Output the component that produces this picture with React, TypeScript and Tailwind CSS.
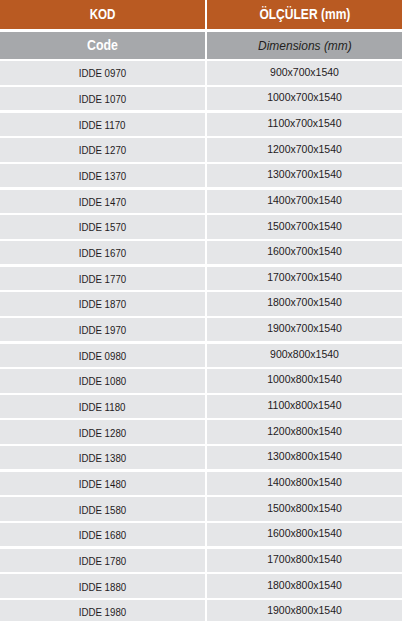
import React from "react";

const rows: [string, string][] = [
  ["IDDE 0970", "900x700x1540"],
  ["IDDE 1070", "1000x700x1540"],
  ["IDDE 1170", "1100x700x1540"],
  ["IDDE 1270", "1200x700x1540"],
  ["IDDE 1370", "1300x700x1540"],
  ["IDDE 1470", "1400x700x1540"],
  ["IDDE 1570", "1500x700x1540"],
  ["IDDE 1670", "1600x700x1540"],
  ["IDDE 1770", "1700x700x1540"],
  ["IDDE 1870", "1800x700x1540"],
  ["IDDE 1970", "1900x700x1540"],
  ["IDDE 0980", "900x800x1540"],
  ["IDDE 1080", "1000x800x1540"],
  ["IDDE 1180", "1100x800x1540"],
  ["IDDE 1280", "1200x800x1540"],
  ["IDDE 1380", "1300x800x1540"],
  ["IDDE 1480", "1400x800x1540"],
  ["IDDE 1580", "1500x800x1540"],
  ["IDDE 1680", "1600x800x1540"],
  ["IDDE 1780", "1700x800x1540"],
  ["IDDE 1880", "1800x800x1540"],
  ["IDDE 1980", "1900x800x1540"],
];

export default function App() {
  return (
    <div
      className="w-[402px] h-[621px] overflow-hidden bg-white"
      style={{ fontFamily: '"Liberation Sans", Arial, sans-serif' }}
    >
      <div className="grid grid-cols-[205px_195px] gap-x-[2px] gap-y-[2.3px]">
        <div className="h-[29.4px] bg-[#b95a22] flex items-center justify-center text-white font-bold text-[14px]">
          <span className="inline-block scale-x-[0.83]">KOD</span>
        </div>
        <div className="h-[29.4px] bg-[#b95a22] flex items-center justify-center text-white font-bold text-[14px]">
          <span className="inline-block scale-x-[0.86]">ÖLÇÜLER (mm)</span>
        </div>
        <div className="h-[27.3px] bg-[#a6a8ab] flex items-center justify-center text-white font-bold text-[14px]">
          <span className="inline-block scale-x-[0.88]">Code</span>
        </div>
        <div className="h-[27.3px] bg-[#a6a8ab] flex items-center justify-center text-[#231f20] italic text-[13px]">
          <span className="inline-block scale-x-[0.92]">Dimensions (mm)</span>
        </div>
        {rows.map(([c, d]) => (
          <React.Fragment key={c}>
            <div className="h-[23.37px] bg-[#e5e6e8] flex items-center justify-center text-[#1f1b1c] text-[10px] pt-[2px]">
              <span className="inline-block scale-x-[0.97]">{c}</span>
            </div>
            <div className="h-[23.37px] bg-[#e5e6e8] flex items-center justify-center text-[#1f1b1c] text-[10.5px] pb-[1px]">
              <span className="inline-block">{d}</span>
            </div>
          </React.Fragment>
        ))}
      </div>
    </div>
  );
}
